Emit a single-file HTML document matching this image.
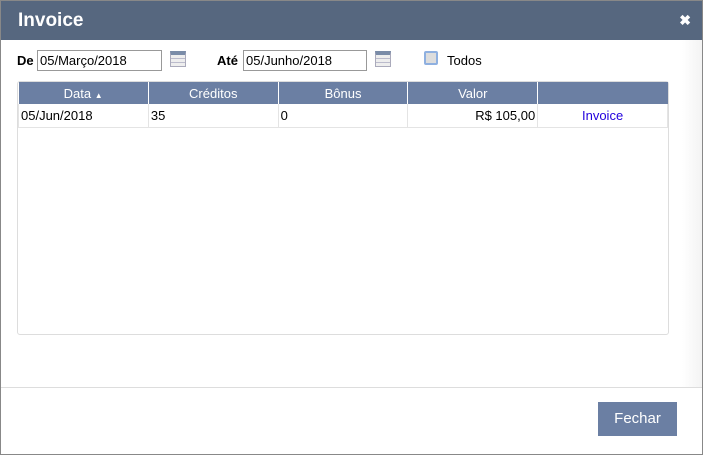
<!DOCTYPE html><html><head><style>
*{margin:0;padding:0;box-sizing:border-box}
body{width:703px;height:455px;background:#fff;font-family:"Liberation Sans",sans-serif;font-size:13px;position:relative;overflow:hidden}
.frame{position:absolute;left:0;top:0;width:703px;height:455px;border:1px solid #888;pointer-events:none}
.hd{position:absolute;left:0;top:0;width:703px;height:40px;background:#56677f;color:#fff;font-weight:bold;font-size:19px;padding:10px 0 0 18px}
.x{position:absolute;right:12px;top:12px;font-size:14px}
.body{position:absolute;left:0;top:40px;width:703px;height:347px;background:linear-gradient(to right,#fff 97%,#f3f3f3)}
.lbl{position:absolute;font-weight:bold;top:53px}
.in{position:absolute;top:50px;height:21px;border:1px solid #999;padding:2px 2px;font-size:13px;line-height:16px}
.cal{position:absolute;top:51px;width:16px;height:16px;border:1px solid #aab;background:repeating-linear-gradient(#eee 0 3px,#bbc 3px 4px);border-top:4px solid #7a8ca8}
.cb{position:absolute;left:424px;top:51px;width:14px;height:14px;border:2px solid #8fb0e0;background:#ddd;border-radius:2px}
.tbl{position:absolute;left:17px;top:81px;width:652px;height:254px;border:1px solid #ddd;border-radius:3px}
table{border-collapse:collapse;width:650px}
th{background:#6b7fa3;color:#fff;font-weight:normal;height:22px;border-right:1px solid #fff;width:130px;font-size:13px}
td{height:23px;border:1px solid #e4e4e4;border-top:none;padding:0 2px;font-size:13px}
.ft{position:absolute;left:0;top:387px;width:703px;border-top:1px solid #ddd}
.btn{position:absolute;left:598px;top:402px;width:79px;height:34px;background:#6b7fa3;color:#fff;font-size:15px;text-align:center;line-height:33px}
</style></head><body>
<div class="hd">Invoice<span class="x">✖</span></div>
<div class="body"></div>
<span class="lbl" style="left:17px">De</span>
<div class="in" style="left:37px;width:125px">05/Março/2018</div>
<div class="cal" style="left:170px"></div>
<span class="lbl" style="left:217px">Até</span>
<div class="in" style="left:243px;width:124px">05/Junho/2018</div>
<div class="cal" style="left:375px"></div>
<div class="cb"></div>
<span style="position:absolute;left:447px;top:53px">Todos</span>
<div class="tbl"><table>
<tr><th>Data <span style="font-size:8px">▲</span></th><th>Créditos</th><th>Bônus</th><th>Valor</th><th style="border-right:none"></th></tr>
<tr><td>05/Jun/2018</td><td>35</td><td>0</td><td style="text-align:right">R$ 105,00</td><td style="text-align:center;color:#2200dd">Invoice</td></tr>
</table></div>
<div class="ft"></div>
<div class="btn">Fechar</div>
<div class="frame"></div>
</body></html>
